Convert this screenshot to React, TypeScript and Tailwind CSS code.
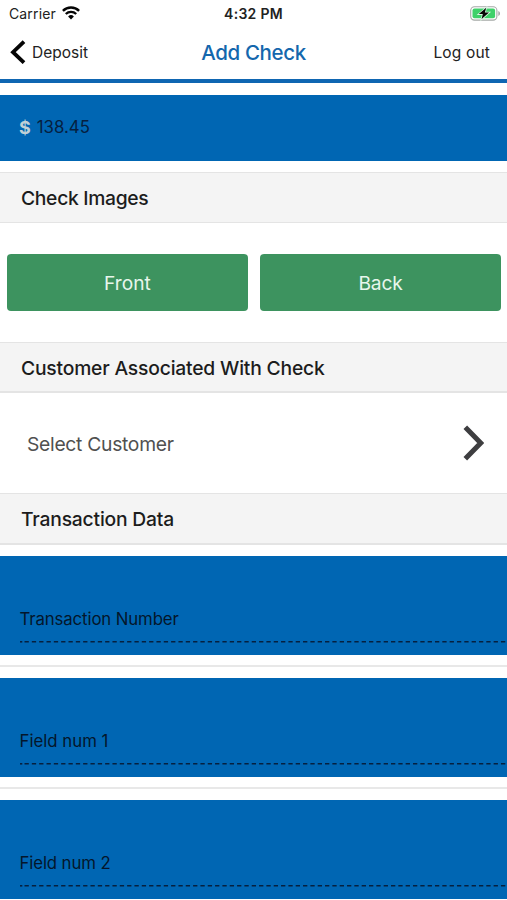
import React from "react";

function SectionHeader({ title, className }: { title: string; className: string }) {
  return (
    <h2
      className={`flex shrink-0 items-center border-[#e4e4e4] bg-[#f4f4f4] pl-[21px] pt-px text-[19.3px] font-[450] leading-6 text-[#1c1c1c] ${className}`}
    >
      {title}
    </h2>
  );
}

function Field({ label, tracking }: { label: string; tracking: string }) {
  return (
    <div className="flex h-[99px] shrink-0 flex-col bg-[#0066b3] pl-[19.5px] pt-[52px]">
      <span className={`h-[22px] whitespace-nowrap text-[16.8px] leading-[22px] text-[#04162b] ${tracking}`}>{label}</span>
      <svg className="mt-[11px] h-[2px] w-full" aria-hidden="true">
        <line x1="0" x2="2.3" y1=".8" y2=".8" stroke="#06203f" strokeWidth="1.6" />
        <line x1="4.5" x2="500" y1=".8" y2=".8" stroke="#06203f" strokeWidth="1.6" strokeDasharray="4.3 3.03" />
      </svg>
    </div>
  );
}

function Separator() {
  return (
    <div className="flex h-[23px] shrink-0 flex-col pt-[10px]">
      <div className="h-[2px] w-full bg-[#e8e8e8]" />
    </div>
  );
}

export default function App() {
  return (
    <main className="flex h-[900px] w-[507px] flex-col overflow-hidden bg-white font-['Inter','Liberation_Sans',sans-serif]">
      <div className="grid h-[27px] shrink-0 grid-cols-3 items-center text-[13.5px] leading-5 text-[#222222]">
        <div className="flex items-center gap-[6px] pl-[9px]">
          <span className="w-[47px] text-[14px] tracking-[0.01em]">Carrier</span>
          <svg className="mb-[1px]" width="18" height="14" viewBox="0 0 18 14" fill="none" aria-hidden="true">
            <path d="M.9 4.9a11.5 11.5 0 0 1 16.2 0" stroke="#050505" strokeWidth="2.4" />
            <path d="M3.8 8a7.4 7.4 0 0 1 10.4 0" stroke="#050505" strokeWidth="2.3" />
            <path d="M6.1 10.4a4.2 4.2 0 0 1 5.8 0L9 13.5Z" fill="#050505" />
          </svg>
        </div>
        <span className="text-center text-[14px] font-semibold tracking-[0.02em]">4:32 PM</span>
        <div className="flex justify-end pr-[6px]">
          <svg width="31" height="15" viewBox="0 0 31 15" aria-hidden="true">
            <rect x=".7" y=".7" width="26.2" height="13.4" rx="3.8" fill="#fff" stroke="#a5a9a7" strokeWidth="1.1" />
            <rect x="2.5" y="2.5" width="22.6" height="9.8" rx="2" fill="#3fd16a" />
            <path d="M28.3 5v5c2.3-.8 2.3-4.2 0-5Z" fill="#a5a9a7" />
            <path d="M16.2 1.8 8.8 8.1h4L11.6 13.1l7.4-6.5h-4.1Z" fill="#050505" stroke="#d9f7e2" strokeWidth="1.6" paintOrder="stroke" />
          </svg>
        </div>
      </div>

      <header className="grid h-[56px] shrink-0 grid-cols-3 items-center border-b-4 border-[#0f66b2] pb-[2px] text-[15.5px] leading-5 text-[#222222]">
        <button className="flex items-center gap-[6px] pl-[10px]">
          <svg width="16" height="24" viewBox="0 0 16 24" fill="none" aria-hidden="true">
            <path d="M14 1.7 3 12.2 14 22.7" stroke="#050505" strokeWidth="3.8" />
          </svg>
          <span className="pt-[2px]">Deposit</span>
        </button>
        <h1 className="pt-px text-center text-[20.5px] font-[450] leading-6 tracking-[-0.018em] text-[#1467ad]">Add Check</h1>
        <button className="pr-[17px] pt-[2px] text-right tracking-[0.01em]">Log out</button>
      </header>

      <div className="mt-3 flex h-[66px] shrink-0 items-center gap-[6px] bg-[#0066b3] pb-[2px] pl-[19px]">
        <span className="relative top-px text-[18px] font-bold leading-6 text-[#bfd0d6]">$</span>
        <span className="text-[16.8px] leading-6 text-[#06203f]">138.45</span>
      </div>

      <SectionHeader title="Check Images" className="mt-[11px] h-[51px] border-y tracking-[-0.016em]" />

      <div className="flex h-[119px] shrink-0 gap-3 px-[7px] pt-[31px]">
        <button className="h-[57px] w-[241px] shrink-0 rounded-[4px] bg-[#3d935f] pt-[2px] text-[19.2px] text-[#e7f6ec]">Front</button>
        <button className="h-[57px] w-[241px] shrink-0 rounded-[4px] bg-[#3d935f] pt-[2px] text-[19.2px] tracking-[-0.01em] text-[#e7f6ec]">Back</button>
      </div>

      <SectionHeader title="Customer Associated With Check" className="h-[51px] border-b-2 border-t tracking-[-0.01em]" />

      <button className="flex h-[100px] shrink-0 items-center justify-between pl-[27px] pr-[23px] text-[19.3px] tracking-[-0.015em] text-[#505050]">
        <span className="pt-[2px]">Select Customer</span>
        <svg width="21" height="36" viewBox="0 0 21 36" fill="none" aria-hidden="true">
          <path d="M2.3 2.2 17.7 18 2.3 33.8" stroke="#3e3e40" strokeWidth="5" />
        </svg>
      </button>

      <SectionHeader title="Transaction Data" className="h-[52px] border-b-2 border-t tracking-[-0.01em]" />

      <div className="mt-[11px] flex shrink-0 flex-col">
        <Field label="Transaction Number" tracking="tracking-[-0.007em]" />
        <Separator />
        <Field label="Field num 1" tracking="tracking-normal" />
        <Separator />
        <Field label="Field num 2" tracking="tracking-[-0.007em]" />
      </div>
    </main>
  );
}
